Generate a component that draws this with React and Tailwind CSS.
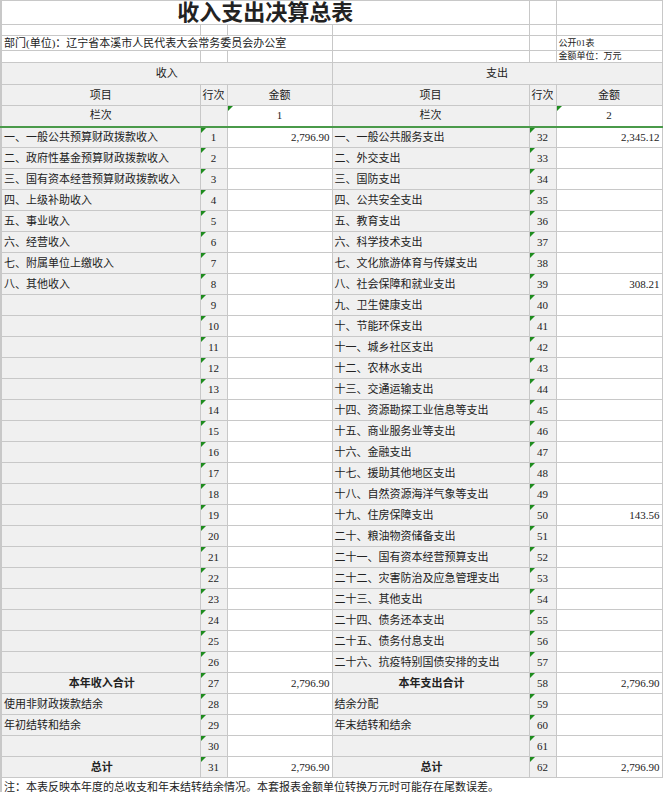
const inc = [
  ["一、一般公共预算财政拨款收入", "2,796.90"],
  ["二、政府性基金预算财政拨款收入"],
  ["三、国有资本经营预算财政拨款收入"],
  ["四、上级补助收入"],
  ["五、事业收入"],
  ["六、经营收入"],
  ["七、附属单位上缴收入"],
  ["八、其他收入"],
];
const exp = [
  ["一、一般公共服务支出", "2,345.12"],
  ["二、外交支出"],
  ["三、国防支出"],
  ["四、公共安全支出"],
  ["五、教育支出"],
  ["六、科学技术支出"],
  ["七、文化旅游体育与传媒支出"],
  ["八、社会保障和就业支出", "308.21"],
  ["九、卫生健康支出"],
  ["十、节能环保支出"],
  ["十一、城乡社区支出"],
  ["十二、农林水支出"],
  ["十三、交通运输支出"],
  ["十四、资源勘探工业信息等支出"],
  ["十五、商业服务业等支出"],
  ["十六、金融支出"],
  ["十七、援助其他地区支出"],
  ["十八、自然资源海洋气象等支出"],
  ["十九、住房保障支出", "143.56"],
  ["二十、粮油物资储备支出"],
  ["二十一、国有资本经营预算支出"],
  ["二十二、灾害防治及应急管理支出"],
  ["二十三、其他支出"],
  ["二十四、债务还本支出"],
  ["二十五、债务付息支出"],
  ["二十六、抗疫特别国债安排的支出"],
];
const tail = [
  ["本年收入合计", "2,796.90", "本年支出合计", "2,796.90", true],
  ["使用非财政拨款结余", "", "结余分配", ""],
  ["年初结转和结余", "", "年末结转和结余", ""],
  ["", "", "", ""],
  ["总计", "2,796.90", "总计", "2,796.90", true],
];

const rows = [];
for (let i = 0; i < 26; i++) {
  rows.push([inc[i]?.[0] || "", inc[i]?.[1] || "", exp[i][0], exp[i][1] || "", false]);
}
tail.forEach((t) => rows.push(t));

const b = "border border-[#c8c8c8] p-0";
const Tri = () => (
  <span className="absolute left-0 top-0 h-0 w-0 border-r-[5px] border-t-[5px] border-r-transparent border-t-[#1e8c1e]" />
);

export default function App() {
  return (
    <div className="h-[792px] w-[663px] overflow-hidden bg-white text-[11px] leading-[13px] text-[#222]" style={{ fontFamily: '"Liberation Serif", "Noto Sans CJK SC", serif' }}>
      <table className="table-fixed border-collapse border-l-2 border-l-[#c8c8c8]">
        <colgroup>
          <col className="w-[199px]" />
          <col className="w-[27px]" />
          <col className="w-[105px]" />
          <col className="w-[197px]" />
          <col className="w-[27px]" />
          <col className="w-[106px]" />
        </colgroup>
        <tbody>
          <tr className="h-[24px]">
            <td colSpan={4} className={`${b} text-center text-[22px] font-bold leading-none`}>收入支出决算总表</td>
            <td className={b} />
            <td className={b} />
          </tr>
          <tr className="h-[11px]">
            {[0, 1, 2, 3, 4, 5].map((i) => <td key={i} className={b} />)}
          </tr>
          <tr className="h-[15px]">
            <td colSpan={3} className={`${b} whitespace-nowrap pl-0.5 text-[11px]`}>部门(单位)：辽宁省本溪市人民代表大会常务委员会办公室</td>
            <td className={b} />
            <td className={b} />
            <td className={`${b} pl-0.5 text-[9px] leading-none`}>公开01表</td>
          </tr>
          <tr className="h-[12px]">
            <td className={b} />
            <td className={b} />
            <td className={b} />
            <td className={b} />
            <td className={b} />
            <td className={`${b} pl-0.5 text-[9px] leading-none`}>金额单位：万元</td>
          </tr>
          <tr className="h-[22px] bg-[#f0f0f0]">
            <td colSpan={3} className={`${b} text-center`}>收入</td>
            <td colSpan={3} className={`${b} text-center`}>支出</td>
          </tr>
          <tr className="h-[21px] bg-[#f0f0f0] text-center">
            <td className={b}>项目</td>
            <td className={b}>行次</td>
            <td className={b}>金额</td>
            <td className={b}>项目</td>
            <td className={b}>行次</td>
            <td className={b}>金额</td>
          </tr>
          <tr className="h-[21px] bg-[#f0f0f0] text-center">
            <td className={b}>栏次</td>
            <td className={b} />
            <td className={`${b} relative bg-white`}><Tri />1</td>
            <td className={b}>栏次</td>
            <td className={b} />
            <td className={`${b} relative bg-white`}><Tri />2</td>
          </tr>
          {rows.map((r, i) => (
            <tr key={i} className={`h-[21px] ${i === 0 ? "border-t-2 border-t-[#4a9a4a]" : ""}`}>
              <td className={`${b} whitespace-nowrap bg-[#f0f0f0] pl-0.5 ${r[4] ? "text-center font-bold" : ""}`}>{r[0]}</td>
              <td className={`${b} relative bg-[#f0f0f0] text-center`}><Tri />{i + 1}</td>
              <td className={`${b} bg-white pr-0.5 text-right`}>{r[1]}</td>
              <td className={`${b} whitespace-nowrap bg-[#f0f0f0] pl-0.5 ${r[4] ? "text-center font-bold" : ""}`}>{r[2]}</td>
              <td className={`${b} relative bg-[#f0f0f0] text-center`}><Tri />{i + 32}</td>
              <td className={`${b} bg-white pr-0.5 text-right`}>{r[3]}</td>
            </tr>
          ))}
          <tr className="h-[19px]">
            <td colSpan={6} className="whitespace-nowrap pl-0.5">注：本表反映本年度的总收支和年末结转结余情况。本套报表金额单位转换万元时可能存在尾数误差。</td>
          </tr>
        </tbody>
      </table>
    </div>
  );
}
